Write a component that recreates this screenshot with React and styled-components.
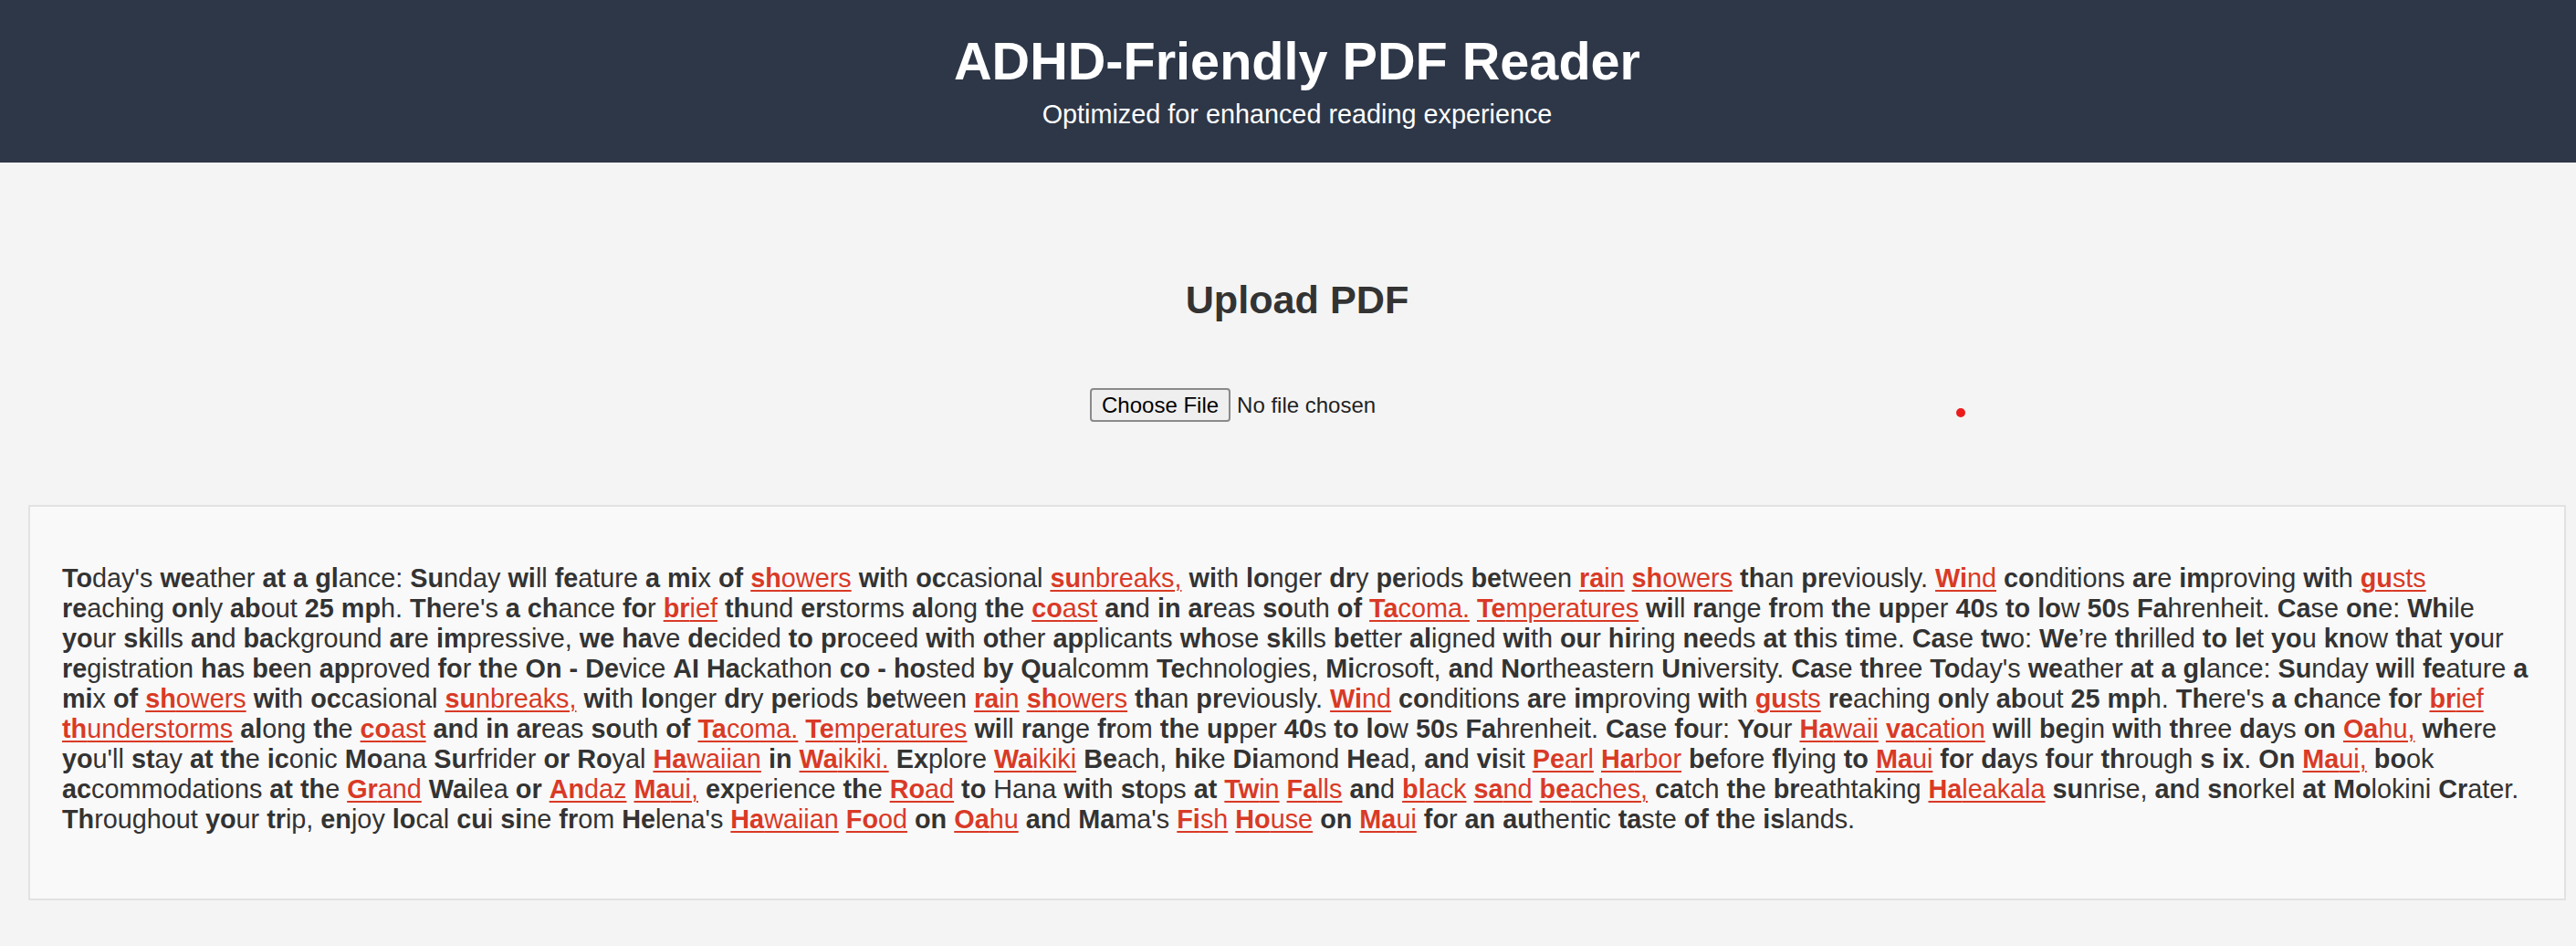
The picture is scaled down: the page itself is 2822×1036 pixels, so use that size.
import React from 'react';
import styled, { createGlobalStyle } from 'styled-components';

// reader text: *word* marks a highlighted (linked) word
const TEXT = "Today's weather at a glance: Sunday will feature a mix of *showers* with occasional *sunbreaks,* with longer dry periods between *rain* *showers* than previously. *Wind* conditions are improving with *gusts* reaching only about 25 mph. There's a chance for *brief* thund erstorms along the *coast* and in areas south of *Tacoma.* *Temperatures* will range from the upper 40s to low 50s Fahrenheit. Case one: While your skills and background are impressive, we have decided to proceed with other applicants whose skills better aligned with our hiring needs at this time. Case two: We’re thrilled to let you know that your registration has been approved for the On - Device AI Hackathon co - hosted by Qualcomm Technologies, Microsoft, and Northeastern University. Case three Today's weather at a glance: Sunday will feature a mix of *showers* with occasional *sunbreaks,* with longer dry periods between *rain* *showers* than previously. *Wind* conditions are improving with *gusts* reaching only about 25 mph. There's a chance for *brief* *thunderstorms* along the *coast* and in areas south of *Tacoma.* *Temperatures* will range from the upper 40s to low 50s Fahrenheit. Case four: Your *Hawaii* *vacation* will begin with three days on *Oahu,* where you'll stay at the iconic Moana Surfrider or Royal *Hawaiian* in *Waikiki.* Explore *Waikiki* Beach, hike Diamond Head, and visit *Pearl* *Harbor* before flying to *Maui* for days four through s ix. On *Maui,* book accommodations at the *Grand* Wailea or *Andaz* *Maui,* experience the *Road* to Hana with stops at *Twin* *Falls* and *black* *sand* *beaches,* catch the breathtaking *Haleakala* sunrise, and snorkel at Molokini Crater. Throughout your trip, enjoy local cui sine from Helena's *Hawaiian* *Food* on *Oahu* and Mama's *Fish* *House* on *Maui* for an authentic taste of the islands.";

const PLAIN = ['Hana'];

function Word({ text }) {
    if (PLAIN.includes(text)) return text;
    return (
        <>
            <Strong>{text.slice(0, 2)}</Strong>
            {text.slice(2)}
        </>
    );
}

export default function App() {
    const words = TEXT.split(' ');

    return (
        <Page>
            <GlobalStyle />
            <Header>
                <Title>ADHD-Friendly PDF Reader</Title>
                <Subtitle>Optimized for enhanced reading experience</Subtitle>
            </Header>
            <Upload>
                <UploadTitle>Upload PDF</UploadTitle>
                <FileInput type="file" accept="application/pdf" />
            </Upload>
            <Reader>
                <Paragraph>
                    {
                        words.map((w, i) => {
                            const linked = w.startsWith('*');
                            const clean = w.replace(/\*/g, '');
                            return (
                                <React.Fragment key={i}>
                                    {linked
                                        ? <Highlight><Word text={clean} /></Highlight>
                                        : <Word text={clean} />}
                                    {i < words.length - 1 ? ' ' : ''}
                                </React.Fragment>
                            );
                        })
                    }
                </Paragraph>
            </Reader>
            <GazeDot />
        </Page>
    );
}

const GlobalStyle = createGlobalStyle`
    html, body{
        margin: 0;
        padding: 0;
        background: #f4f4f4;
        overflow-x: hidden;
    }
    body{
        font-family: "Liberation Sans", Arial, sans-serif;
        color: #333;
    }
`;

// page is a little wider than the window, as in the original capture
const Page = styled.div`
    position: relative;
    width: 2842px;
    min-height: 1036px;
`;

const Header = styled.header`
    background: #2d3748;
    color: #fff;
    text-align: center;
    padding: 34px 0 36px;
`;

const Title = styled.h1`
    margin: 0;
    font-size: 57.6px;
    font-weight: 700;
    line-height: 66px;
`;

const Subtitle = styled.p`
    margin: 9px 0 0;
    font-size: 28.8px;
    line-height: 33px;
`;

const Upload = styled.section`
    padding-top: 125px;
    text-align: center;
`;

const UploadTitle = styled.h2`
    margin: 0 0 72px;
    font-size: 43.2px;
    font-weight: 700;
    line-height: 50px;
    color: #333;
`;

const FileInput = styled.input`
    display: block;
    margin: 0 auto;
    width: 454px;
    height: 37px;
    font-family: "Liberation Sans", Arial, sans-serif;
    font-size: 24px;
    color: #222;
    &::file-selector-button{
        font: inherit;
        color: #000;
        height: 37px;
        padding: 0 11px;
        margin-right: 7px;
        background: #efefef;
        border: 2px solid #8a8a8a;
        border-radius: 4px;
    }
`;

const Reader = styled.div`
    margin: 91px 31px 50px;
    padding: 62px 36px 70px 35px;
    background: #f9f9f9;
    border: 2px solid #e2e2e2;
`;

const Paragraph = styled.p`
    margin: 0;
    font-size: 28.8px;
    line-height: 33px;
    color: #333;
`;

const Strong = styled.b`
    font-weight: 700;
`;

const Highlight = styled.a`
    color: #d93a26;
    text-decoration: underline;
    text-decoration-thickness: 2px;
    text-underline-offset: 3px;
`;

const GazeDot = styled.span`
    position: absolute;
    left: 2143px;
    top: 447px;
    width: 10px;
    height: 10px;
    border-radius: 50%;
    background: #ec1c1c;
`;
